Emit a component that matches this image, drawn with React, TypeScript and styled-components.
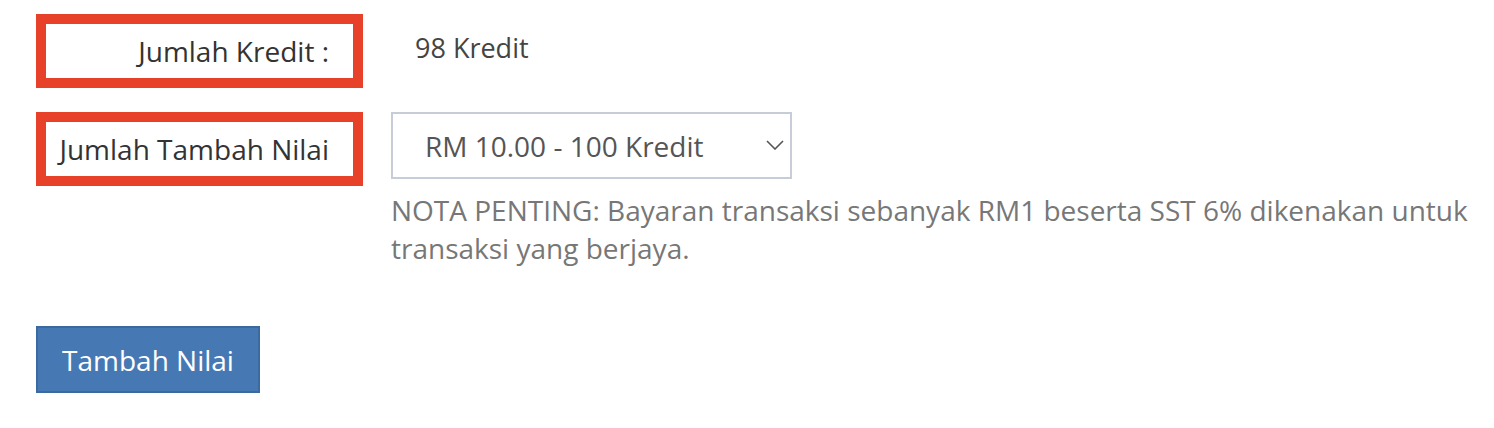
import React from "react";
import styled, { createGlobalStyle } from "styled-components";

const GlobalStyle = createGlobalStyle`
  body {
    margin: 0;
    background: #fff;
    font-family: "Open Sans", "Noto Sans", sans-serif;
  }
`;

const Page = styled.div`
  padding: 14px 0 0 36px;
`;

const FormRow = styled.div<{ $mb: number }>`
  display: flex;
  align-items: flex-start;
  margin-bottom: ${(p) => p.$mb}px;
`;

const LabelBox = styled.div`
  box-sizing: border-box;
  width: 327px;
  height: 74px;
  border: 10px solid #e8412a;
  display: flex;
  align-items: center;
  justify-content: flex-end;
  padding-right: 24px;
  font-size: 28px;
  color: #333;
  white-space: nowrap;
`;

const ValueText = styled.div`
  margin-left: 52px;
  height: 66px;
  display: flex;
  align-items: center;
  font-size: 27px;
  color: #444;
`;

const FieldColumn = styled.div`
  margin-left: 28px;
  display: flex;
  flex-direction: column;
`;

const SelectWrap = styled.div`
  position: relative;
  width: 401px;
  height: 67px;
`;

const Select = styled.select`
  box-sizing: border-box;
  appearance: none;
  width: 100%;
  height: 100%;
  border: 2px solid #c6cdd9;
  border-radius: 0;
  background: #fff;
  padding: 0 0 0 32px;
  font-family: "Open Sans", "Noto Sans", sans-serif;
  font-size: 28px;
  color: #555;
  outline: none;
`;

const Chevron = styled.svg`
  position: absolute;
  right: 8px;
  top: 28px;
  pointer-events: none;
`;

const Note = styled.p`
  margin: 12px 0 0;
  width: 1100px;
  font-size: 28px;
  line-height: 38px;
  color: #777;
`;

const SubmitButton = styled.button`
  box-sizing: border-box;
  width: 224px;
  height: 67px;
  background: #4679b4;
  border: 2px solid #3b6aa1;
  color: #fff;
  font-family: "Open Sans", "Noto Sans", sans-serif;
  font-size: 28px;
  padding: 0;
`;

export default function App() {
  return (
    <>
      <GlobalStyle />
      <Page>
        <FormRow $mb={24}>
          <LabelBox>Jumlah Kredit :</LabelBox>
          <ValueText>98 Kredit</ValueText>
        </FormRow>
        <FormRow $mb={59}>
          <LabelBox>Jumlah Tambah Nilai</LabelBox>
          <FieldColumn>
            <SelectWrap>
              <Select defaultValue="10">
                <option value="10">RM 10.00 - 100 Kredit</option>
                <option value="20">RM 20.00 - 200 Kredit</option>
                <option value="50">RM 50.00 - 500 Kredit</option>
              </Select>
              <Chevron width="18" height="10" viewBox="0 0 18 10">
                <path d="M1 1 L9 9 L17 1" fill="none" stroke="#555" strokeWidth="1.6" />
              </Chevron>
            </SelectWrap>
            <Note>
              NOTA PENTING: Bayaran transaksi sebanyak RM1 beserta SST 6% dikenakan untuk
              transaksi yang berjaya.
            </Note>
          </FieldColumn>
        </FormRow>
        <SubmitButton>Tambah Nilai</SubmitButton>
      </Page>
    </>
  );
}
